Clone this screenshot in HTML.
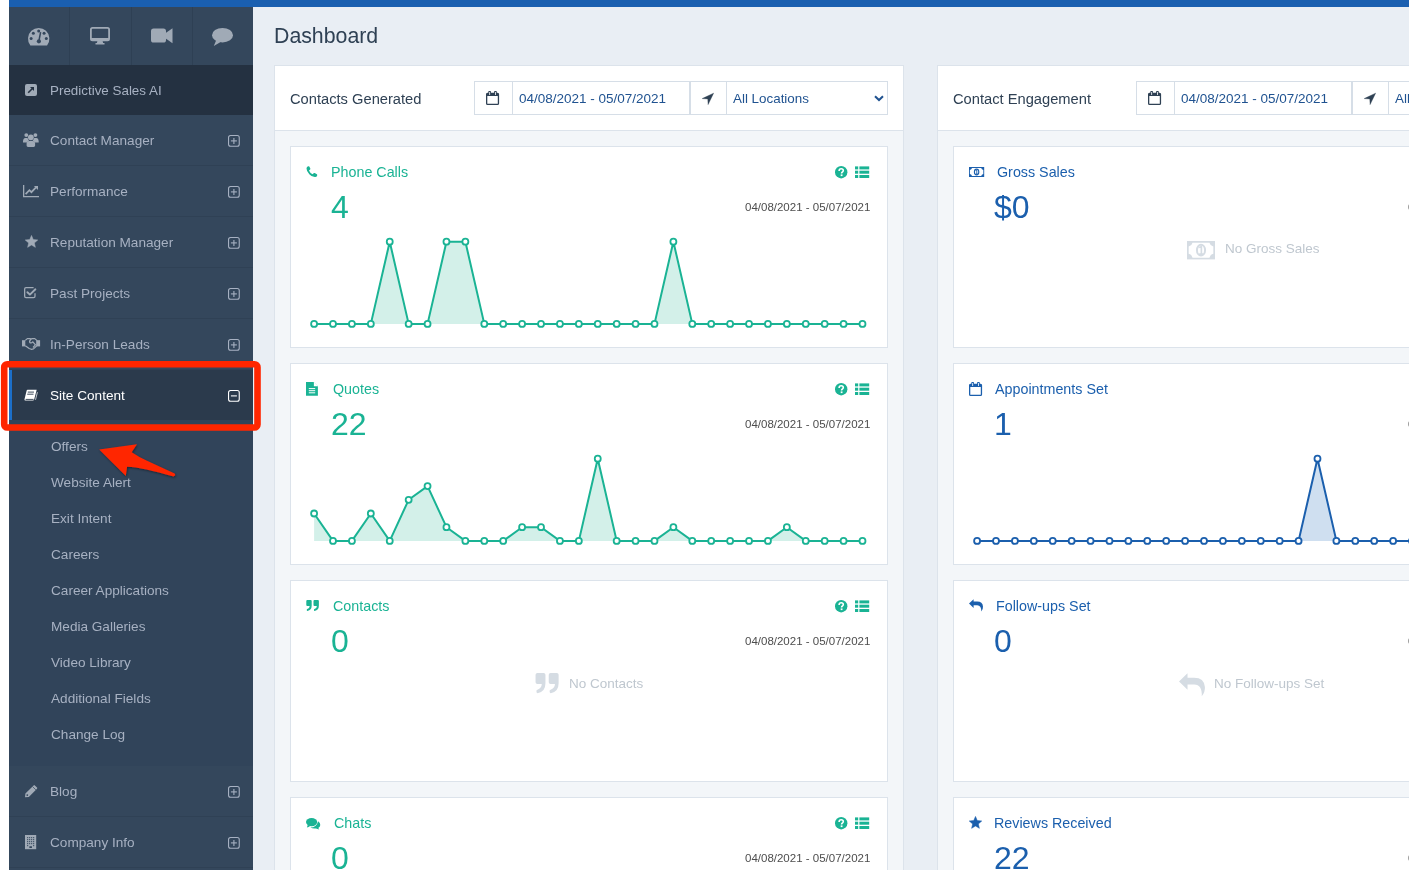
<!DOCTYPE html>
<html><head><meta charset="utf-8">
<style>
*{box-sizing:border-box;margin:0;padding:0}
html,body{width:1409px;height:870px;overflow:hidden;background:#fff;font-family:"Liberation Sans",sans-serif}
.abs{position:absolute}
.t{white-space:nowrap;will-change:transform}
svg{overflow:visible}
</style></head><body>

<div class="abs" style="left:9px;top:0;width:1400px;height:7px;background:#1a5fb0"></div>
<div class="abs" style="left:9px;top:7px;width:244px;height:863px;background:#34475c"></div>
<div class="abs" style="left:69px;top:7px;width:1px;height:58px;background:#2e4054"></div>
<div class="abs" style="left:131px;top:7px;width:1px;height:58px;background:#2e4054"></div>
<div class="abs" style="left:192px;top:7px;width:1px;height:58px;background:#2e4054"></div>
<svg class="abs" style="left:27.9px;top:27.6px" width="22" height="18" viewBox="0 0 22 18"><path d="M2.36 17.4 A10.7 10.7 0 1 1 19.04 17.4 Z" fill="#a0aab6"/><circle cx="10.70" cy="3.10" r="1.5" fill="#34475c"/><circle cx="5.33" cy="5.33" r="1.5" fill="#34475c"/><circle cx="16.07" cy="5.33" r="1.5" fill="#34475c"/><circle cx="3.10" cy="10.40" r="1.5" fill="#34475c"/><circle cx="18.30" cy="10.40" r="1.5" fill="#34475c"/><path d="M12.6 4.2 L11.1 12" stroke="#34475c" stroke-width="1.5"/><circle cx="10.9" cy="13.3" r="2.1" fill="#34475c"/></svg>
<svg class="abs" style="left:90px;top:27px" width="20" height="18" viewBox="0 0 20 18"><rect x="0.9" y="0.9" width="18.2" height="12.4" rx="1.6" fill="none" stroke="#a0aab6" stroke-width="1.8"/><rect x="1" y="11" width="18" height="2.5" fill="#a0aab6"/><path d="M7.5 13.5h5l.6 2.6h1.4v1.3H5.5v-1.3h1.4z" fill="#a0aab6"/></svg>
<svg class="abs" style="left:150.6px;top:28px" width="22" height="16" viewBox="0 0 22 16"><rect x="0" y="0.5" width="15" height="14" rx="2.6" fill="#a0aab6"/><path d="M14 5.5 L21.5 0.3 V15.2 L14 10z" fill="#a0aab6"/></svg>
<svg class="abs" style="left:212.3px;top:28px" width="21" height="18" viewBox="0 0 21 18"><ellipse cx="10.5" cy="7.2" rx="10.5" ry="7.2" fill="#a0aab6"/><path d="M4.5 11.5 L1.8 18 L9.5 13.5z" fill="#a0aab6"/></svg>
<div class="abs" style="left:9px;top:65px;width:244px;height:50px;background:#243141"></div>
<svg class="abs" style="left:25px;top:84px" width="12" height="12" viewBox="0 0 12 12"><rect x="0" y="0" width="12" height="12" rx="2" fill="#a0aab6"/><path d="M3.2 8.8 L8.2 3.8" stroke="#243141" stroke-width="1.6"/><path d="M5 3 H9 V7z" fill="#243141"/></svg>
<div class="abs t" style="left:50.4px;top:84px;font-size:13.4px;line-height:13.4px;color:#a7b1c2;">Predictive Sales AI</div>
<div class="abs" style="left:9px;top:165px;width:244px;height:1px;background:#2f4155"></div>
<svg class="abs" style="left:23px;top:133px" width="16" height="14" viewBox="0 0 16 14"><circle cx="3.3" cy="2.1" r="1.9" fill="#a0aab6"/><circle cx="12.4" cy="2.1" r="1.9" fill="#a0aab6"/><circle cx="7.85" cy="4.3" r="2.9" fill="#a0aab6"/><path d="M0 8.5c0-2 .9-3.6 2.3-3.6h1.8c.5 0 .8.4.9.9 .2.9.6 1.6 1.2 2.1-1 .3-1.8 .8-2.3 1.5H0z" fill="#a0aab6"/><path d="M15.7 8.5c0-2-.9-3.6-2.3-3.6h-1.8c-.5 0-.8.4-.9.9-.2.9-.6 1.6-1.2 2.1 1 .3 1.8.8 2.3 1.5h3.9z" fill="#a0aab6"/><path d="M3.6 12.6v-2c0-1.4 1-2.6 2.4-2.6h3.7c1.4 0 2.4 1.2 2.4 2.6v2c0 .8-.6 1.4-1.4 1.4H5c-.8 0-1.4-.6-1.4-1.4z" fill="#a0aab6"/></svg>
<div class="abs t" style="left:50.4px;top:134px;font-size:13.6px;line-height:13.6px;color:#a7b1c2;">Contact Manager</div>
<svg class="abs" style="left:227.5px;top:134.5px" width="12" height="12" viewBox="0 0 12 12"><rect x="0.55" y="0.55" width="10.7" height="10.7" rx="2" fill="none" stroke="#a7b1c2" stroke-width="1.1"/><path d="M2.9 5.9 H8.9" stroke="#a7b1c2" stroke-width="1.1"/><path d="M5.9 2.9 V8.9" stroke="#a7b1c2" stroke-width="1.1"/></svg>
<div class="abs" style="left:9px;top:216px;width:244px;height:1px;background:#2f4155"></div>
<svg class="abs" style="left:23px;top:184.8px" width="17" height="13" viewBox="0 0 17 13"><path d="M0.65 0 V11.6 H16" fill="none" stroke="#a0aab6" stroke-width="1.3"/><path d="M2.6 9.1 L6.4 5.2 L8.4 7.2 L13 2.4" fill="none" stroke="#a0aab6" stroke-width="1.7"/><path d="M10.9 1 H15 V5.1z" fill="#a0aab6"/></svg>
<div class="abs t" style="left:50.4px;top:185px;font-size:13.6px;line-height:13.6px;color:#a7b1c2;">Performance</div>
<svg class="abs" style="left:227.5px;top:185.5px" width="12" height="12" viewBox="0 0 12 12"><rect x="0.55" y="0.55" width="10.7" height="10.7" rx="2" fill="none" stroke="#a7b1c2" stroke-width="1.1"/><path d="M2.9 5.9 H8.9" stroke="#a7b1c2" stroke-width="1.1"/><path d="M5.9 2.9 V8.9" stroke="#a7b1c2" stroke-width="1.1"/></svg>
<div class="abs" style="left:9px;top:267px;width:244px;height:1px;background:#2f4155"></div>
<svg class="abs" style="left:24.5px;top:235px" width="13" height="13" viewBox="0 0 13 13"><polygon points="6.50,0.40 8.26,4.57 12.78,4.96 9.35,7.93 10.38,12.34 6.50,10.00 2.62,12.34 3.65,7.93 0.22,4.96 4.74,4.57" fill="#a0aab6" stroke="#a0aab6" stroke-width="0.5" stroke-linejoin="round"/></svg>
<div class="abs t" style="left:50.4px;top:236px;font-size:13.6px;line-height:13.6px;color:#a7b1c2;">Reputation Manager</div>
<svg class="abs" style="left:227.5px;top:236.5px" width="12" height="12" viewBox="0 0 12 12"><rect x="0.55" y="0.55" width="10.7" height="10.7" rx="2" fill="none" stroke="#a7b1c2" stroke-width="1.1"/><path d="M2.9 5.9 H8.9" stroke="#a7b1c2" stroke-width="1.1"/><path d="M5.9 2.9 V8.9" stroke="#a7b1c2" stroke-width="1.1"/></svg>
<div class="abs" style="left:9px;top:318px;width:244px;height:1px;background:#2f4155"></div>
<svg class="abs" style="left:24.2px;top:286.8px" width="13" height="12" viewBox="0 0 13 12"><path d="M11 6.2 V9.2 Q11 10.6 9.6 10.6 H2 Q0.65 10.6 0.65 9.2 V2.1 Q0.65 0.7 2 0.7 H9.6" fill="none" stroke="#a0aab6" stroke-width="1.3"/><path d="M3.4 5.2 L5.9 7.6 L11.4 2.3" fill="none" stroke="#a0aab6" stroke-width="1.9" stroke-linecap="round" stroke-linejoin="round"/></svg>
<div class="abs t" style="left:50.4px;top:287px;font-size:13.6px;line-height:13.6px;color:#a7b1c2;">Past Projects</div>
<svg class="abs" style="left:227.5px;top:287.5px" width="12" height="12" viewBox="0 0 12 12"><rect x="0.55" y="0.55" width="10.7" height="10.7" rx="2" fill="none" stroke="#a7b1c2" stroke-width="1.1"/><path d="M2.9 5.9 H8.9" stroke="#a7b1c2" stroke-width="1.1"/><path d="M5.9 2.9 V8.9" stroke="#a7b1c2" stroke-width="1.1"/></svg>
<div class="abs" style="left:9px;top:369px;width:244px;height:1px;background:#2f4155"></div>
<svg class="abs" style="left:22px;top:338.3px" width="18" height="12" viewBox="0 0 18 12"><rect x="0" y="2.2" width="3.3" height="6.2" fill="#a0aab6"/><rect x="14.8" y="2.2" width="3.3" height="6.2" fill="#a0aab6"/><path d="M3.3 2.4 L5.3 0.6 H8 L9 1.3 L10.1 0.6 H12.8 L14.8 2.4 V7.8 L11.5 10.9 L9.2 11.3 L7.2 10.5 L3.3 7.8" fill="none" stroke="#a0aab6" stroke-width="1.2" stroke-linejoin="round"/><path d="M9 1.3 Q6.8 3.2 8 4.8 Q9.4 5.4 10.8 3.8 L13.4 6.8 L11 9.5" fill="none" stroke="#a0aab6" stroke-width="1.2"/></svg>
<div class="abs t" style="left:50.4px;top:338px;font-size:13.6px;line-height:13.6px;color:#a7b1c2;">In-Person Leads</div>
<svg class="abs" style="left:227.5px;top:338.5px" width="12" height="12" viewBox="0 0 12 12"><rect x="0.55" y="0.55" width="10.7" height="10.7" rx="2" fill="none" stroke="#a7b1c2" stroke-width="1.1"/><path d="M2.9 5.9 H8.9" stroke="#a7b1c2" stroke-width="1.1"/><path d="M5.9 2.9 V8.9" stroke="#a7b1c2" stroke-width="1.1"/></svg>
<div class="abs" style="left:9px;top:370px;width:244px;height:50px;background:#2b3a4c"></div>
<div class="abs" style="left:9px;top:370px;width:3px;height:50px;background:#1c6fc9"></div>
<svg class="abs" style="left:24.4px;top:388.6px" width="14" height="13" viewBox="0 0 14 13"><path d="M3.6 0.8 H12.7 L10.2 10.2 Q10 11.5 8.8 11.5 H1.4 Q0.2 11.5 0.5 10.2 L2.6 1.8 Q2.8 0.8 3.6 0.8z" fill="#fff"/><path d="M1.6 10.4 H9.6" stroke="#2b3a4c" stroke-width="0.9"/><path d="M4.2 3.1 H9.6 M3.6 5.2 H9.1" stroke="#2b3a4c" stroke-width="0.9" stroke-linecap="round"/><path d="M13.4 3.2 L11.5 10.8" stroke="#fff" stroke-width="0.7"/></svg>
<div class="abs t" style="left:50.4px;top:389px;font-size:13.6px;line-height:13.6px;color:#fff;">Site Content</div>
<svg class="abs" style="left:227.5px;top:389.5px" width="12" height="12" viewBox="0 0 12 12"><rect x="0.55" y="0.55" width="10.7" height="10.7" rx="2" fill="none" stroke="#fff" stroke-width="1.1"/><path d="M2.9 5.9 H8.9" stroke="#fff" stroke-width="1.1"/></svg>
<div class="abs" style="left:9px;top:420px;width:244px;height:346px;background:#31445a"></div>
<div class="abs t" style="left:51px;top:440px;font-size:13.6px;line-height:13.6px;color:#a7b1c2;">Offers</div>
<div class="abs t" style="left:51px;top:476px;font-size:13.6px;line-height:13.6px;color:#a7b1c2;">Website Alert</div>
<div class="abs t" style="left:51px;top:512px;font-size:13.6px;line-height:13.6px;color:#a7b1c2;">Exit Intent</div>
<div class="abs t" style="left:51px;top:548px;font-size:13.6px;line-height:13.6px;color:#a7b1c2;">Careers</div>
<div class="abs t" style="left:51px;top:584px;font-size:13.6px;line-height:13.6px;color:#a7b1c2;">Career Applications</div>
<div class="abs t" style="left:51px;top:620px;font-size:13.6px;line-height:13.6px;color:#a7b1c2;">Media Galleries</div>
<div class="abs t" style="left:51px;top:656px;font-size:13.6px;line-height:13.6px;color:#a7b1c2;">Video Library</div>
<div class="abs t" style="left:51px;top:692px;font-size:13.6px;line-height:13.6px;color:#a7b1c2;">Additional Fields</div>
<div class="abs t" style="left:51px;top:728px;font-size:13.6px;line-height:13.6px;color:#a7b1c2;">Change Log</div>
<div class="abs" style="left:9px;top:816px;width:244px;height:1px;background:#2f4155"></div>
<svg class="abs" style="left:24.7px;top:784.9px" width="13" height="13" viewBox="0 0 13 13"><path d="M0 12.3 L0.4 8.6 L8.6 0.4 Q9.2 -0.2 9.8 0.4 L12 2.6 Q12.6 3.2 12 3.8 L3.8 12z" fill="#a0aab6"/><path d="M7.6 1.6 L10.9 4.9" stroke="#34475c" stroke-width="0.7"/><circle cx="2.3" cy="10.1" r="0.9" fill="#34475c"/></svg>
<div class="abs t" style="left:50.4px;top:785px;font-size:13.6px;line-height:13.6px;color:#a7b1c2;">Blog</div>
<svg class="abs" style="left:227.5px;top:785.5px" width="12" height="12" viewBox="0 0 12 12"><rect x="0.55" y="0.55" width="10.7" height="10.7" rx="2" fill="none" stroke="#a7b1c2" stroke-width="1.1"/><path d="M2.9 5.9 H8.9" stroke="#a7b1c2" stroke-width="1.1"/><path d="M5.9 2.9 V8.9" stroke="#a7b1c2" stroke-width="1.1"/></svg>
<div class="abs" style="left:9px;top:867px;width:244px;height:1px;background:#2f4155"></div>
<svg class="abs" style="left:24.9px;top:834.9px" width="12" height="15" viewBox="0 0 12 15"><rect x="0" y="0" width="11.2" height="14.2" fill="#a0aab6"/><rect x="2.1" y="2.1" width="1.1" height="1.1" fill="#34475c"/><rect x="4.1" y="2.1" width="1.1" height="1.1" fill="#34475c"/><rect x="6.1" y="2.1" width="1.1" height="1.1" fill="#34475c"/><rect x="8.1" y="2.1" width="1.1" height="1.1" fill="#34475c"/><rect x="2.1" y="4.1" width="1.1" height="1.1" fill="#34475c"/><rect x="4.1" y="4.1" width="1.1" height="1.1" fill="#34475c"/><rect x="6.1" y="4.1" width="1.1" height="1.1" fill="#34475c"/><rect x="8.1" y="4.1" width="1.1" height="1.1" fill="#34475c"/><rect x="2.1" y="6.1" width="1.1" height="1.1" fill="#34475c"/><rect x="4.1" y="6.1" width="1.1" height="1.1" fill="#34475c"/><rect x="6.1" y="6.1" width="1.1" height="1.1" fill="#34475c"/><rect x="8.1" y="6.1" width="1.1" height="1.1" fill="#34475c"/><rect x="2.1" y="8.1" width="1.1" height="1.1" fill="#34475c"/><rect x="4.1" y="8.1" width="1.1" height="1.1" fill="#34475c"/><rect x="6.1" y="8.1" width="1.1" height="1.1" fill="#34475c"/><rect x="8.1" y="8.1" width="1.1" height="1.1" fill="#34475c"/><rect x="2.1" y="10.1" width="1.1" height="1.1" fill="#34475c"/><rect x="8.1" y="10.1" width="1.1" height="1.1" fill="#34475c"/><rect x="4.3" y="11.3" width="2.7" height="1.6" rx="0.3" fill="#34475c"/></svg>
<div class="abs t" style="left:50.4px;top:836px;font-size:13.6px;line-height:13.6px;color:#a7b1c2;">Company Info</div>
<svg class="abs" style="left:227.5px;top:836.5px" width="12" height="12" viewBox="0 0 12 12"><rect x="0.55" y="0.55" width="10.7" height="10.7" rx="2" fill="none" stroke="#a7b1c2" stroke-width="1.1"/><path d="M2.9 5.9 H8.9" stroke="#a7b1c2" stroke-width="1.1"/><path d="M5.9 2.9 V8.9" stroke="#a7b1c2" stroke-width="1.1"/></svg>
<div class="abs" style="left:253px;top:7px;width:1156px;height:863px;background:#e9eef4"></div>
<div class="abs t" style="left:274px;top:26px;font-size:21.3px;line-height:21.3px;color:#2f4154;">Dashboard</div>
<div class="abs" style="left:274px;top:65px;width:630px;height:900px;background:#f3f6f9;border:1px solid #dce3eb"></div>
<div class="abs" style="left:275px;top:66px;width:628px;height:65px;background:#fff;border-bottom:1px solid #dce3eb"></div>
<div class="abs t" style="left:290px;top:92px;font-size:14.7px;line-height:14.7px;color:#2f4154;">Contacts Generated</div>
<div class="abs" style="left:474px;top:81px;width:414px;height:34px;background:#fff;border:1px solid #d6dee7"></div>
<div class="abs" style="left:512px;top:81px;width:1px;height:34px;background:#d6dee7"></div>
<div class="abs" style="left:689px;top:81px;width:1px;height:34px;background:#d6dee7"></div>
<div class="abs" style="left:690px;top:81px;width:1px;height:34px;background:#d6dee7"></div>
<div class="abs" style="left:726px;top:81px;width:1px;height:34px;background:#d6dee7"></div>
<svg class="abs" style="left:486px;top:90.5px" width="13" height="14" viewBox="0 0 13 14"><rect x="0.65" y="2.4" width="11.8" height="10.9" rx="0.9" fill="none" stroke="#2f4154" stroke-width="1.3"/><rect x="0.65" y="2.4" width="11.8" height="2.6" fill="#2f4154"/><rect x="2.3" y="0" width="2.7" height="4.5" rx="0.8" fill="#2f4154"/><rect x="8.1" y="0" width="2.7" height="4.5" rx="0.8" fill="#2f4154"/><rect x="3.3" y="1.0" width="0.8" height="3" fill="#fff"/><rect x="9.1" y="1.0" width="0.8" height="3" fill="#fff"/></svg>
<div class="abs t" style="left:518.5px;top:92px;font-size:13.5px;line-height:13.5px;color:#1f5290;">04/08/2021 - 05/07/2021</div>
<svg class="abs" style="left:702px;top:92.5px" width="12" height="12" viewBox="0 0 12 12"><path d="M11.6 0.2 L0.2 5.6 L5.8 5.9 L6.1 11.6z" fill="#2f4154" stroke="#2f4154" stroke-width="0.4" stroke-linejoin="round"/></svg>
<div class="abs t" style="left:732.5px;top:92px;font-size:13.4px;line-height:13.4px;color:#1f5290;">All Locations</div>
<svg class="abs" style="left:874px;top:95px" width="10" height="7" viewBox="0 0 10 7"><path d="M1 1.2 L5 5 L9 1.2" fill="none" stroke="#1f5290" stroke-width="2"/></svg>
<div class="abs" style="left:937px;top:65px;width:630px;height:900px;background:#f3f6f9;border:1px solid #dce3eb"></div>
<div class="abs" style="left:938px;top:66px;width:628px;height:65px;background:#fff;border-bottom:1px solid #dce3eb"></div>
<div class="abs t" style="left:953px;top:92px;font-size:14.7px;line-height:14.7px;color:#2f4154;">Contact Engagement</div>
<div class="abs" style="left:1136px;top:81px;width:414px;height:34px;background:#fff;border:1px solid #d6dee7"></div>
<div class="abs" style="left:1174px;top:81px;width:1px;height:34px;background:#d6dee7"></div>
<div class="abs" style="left:1351px;top:81px;width:1px;height:34px;background:#d6dee7"></div>
<div class="abs" style="left:1352px;top:81px;width:1px;height:34px;background:#d6dee7"></div>
<div class="abs" style="left:1388px;top:81px;width:1px;height:34px;background:#d6dee7"></div>
<svg class="abs" style="left:1148px;top:90.5px" width="13" height="14" viewBox="0 0 13 14"><rect x="0.65" y="2.4" width="11.8" height="10.9" rx="0.9" fill="none" stroke="#2f4154" stroke-width="1.3"/><rect x="0.65" y="2.4" width="11.8" height="2.6" fill="#2f4154"/><rect x="2.3" y="0" width="2.7" height="4.5" rx="0.8" fill="#2f4154"/><rect x="8.1" y="0" width="2.7" height="4.5" rx="0.8" fill="#2f4154"/><rect x="3.3" y="1.0" width="0.8" height="3" fill="#fff"/><rect x="9.1" y="1.0" width="0.8" height="3" fill="#fff"/></svg>
<div class="abs t" style="left:1180.5px;top:92px;font-size:13.5px;line-height:13.5px;color:#1f5290;">04/08/2021 - 05/07/2021</div>
<svg class="abs" style="left:1364px;top:92.5px" width="12" height="12" viewBox="0 0 12 12"><path d="M11.6 0.2 L0.2 5.6 L5.8 5.9 L6.1 11.6z" fill="#2f4154" stroke="#2f4154" stroke-width="0.4" stroke-linejoin="round"/></svg>
<div class="abs t" style="left:1394.5px;top:92px;font-size:13.4px;line-height:13.4px;color:#1f5290;">All Locations</div>
<svg class="abs" style="left:1536px;top:95px" width="10" height="7" viewBox="0 0 10 7"><path d="M1 1.2 L5 5 L9 1.2" fill="none" stroke="#1f5290" stroke-width="2"/></svg>
<div class="abs" style="left:290px;top:146px;width:598px;height:202px;background:#fff;border:1px solid #dce3eb;overflow:hidden">
<svg class="abs" style="left:-1px;top:-1px" width="598" height="202"><path d="M24.10,177.90 L24.10,177.90 L43.01,177.90 L61.92,177.90 L80.83,177.90 L99.74,95.70 L118.65,177.90 L137.56,177.90 L156.47,95.70 L175.38,95.70 L194.29,177.90 L213.20,177.90 L232.11,177.90 L251.02,177.90 L269.93,177.90 L288.84,177.90 L307.75,177.90 L326.66,177.90 L345.57,177.90 L364.48,177.90 L383.39,95.70 L402.30,177.90 L421.21,177.90 L440.12,177.90 L459.03,177.90 L477.94,177.90 L496.85,177.90 L515.76,177.90 L534.67,177.90 L553.58,177.90 L572.49,177.90 L572.49,177.90z" fill="#d3f0e9"/><polyline points="24.10,177.90 43.01,177.90 61.92,177.90 80.83,177.90 99.74,95.70 118.65,177.90 137.56,177.90 156.47,95.70 175.38,95.70 194.29,177.90 213.20,177.90 232.11,177.90 251.02,177.90 269.93,177.90 288.84,177.90 307.75,177.90 326.66,177.90 345.57,177.90 364.48,177.90 383.39,95.70 402.30,177.90 421.21,177.90 440.12,177.90 459.03,177.90 477.94,177.90 496.85,177.90 515.76,177.90 534.67,177.90 553.58,177.90 572.49,177.90" fill="none" stroke="#1ab394" stroke-width="2" stroke-linejoin="round"/><circle cx="24.10" cy="177.90" r="3" fill="#fff" stroke="#1ab394" stroke-width="1.8"/><circle cx="43.01" cy="177.90" r="3" fill="#fff" stroke="#1ab394" stroke-width="1.8"/><circle cx="61.92" cy="177.90" r="3" fill="#fff" stroke="#1ab394" stroke-width="1.8"/><circle cx="80.83" cy="177.90" r="3" fill="#fff" stroke="#1ab394" stroke-width="1.8"/><circle cx="99.74" cy="95.70" r="3" fill="#fff" stroke="#1ab394" stroke-width="1.8"/><circle cx="118.65" cy="177.90" r="3" fill="#fff" stroke="#1ab394" stroke-width="1.8"/><circle cx="137.56" cy="177.90" r="3" fill="#fff" stroke="#1ab394" stroke-width="1.8"/><circle cx="156.47" cy="95.70" r="3" fill="#fff" stroke="#1ab394" stroke-width="1.8"/><circle cx="175.38" cy="95.70" r="3" fill="#fff" stroke="#1ab394" stroke-width="1.8"/><circle cx="194.29" cy="177.90" r="3" fill="#fff" stroke="#1ab394" stroke-width="1.8"/><circle cx="213.20" cy="177.90" r="3" fill="#fff" stroke="#1ab394" stroke-width="1.8"/><circle cx="232.11" cy="177.90" r="3" fill="#fff" stroke="#1ab394" stroke-width="1.8"/><circle cx="251.02" cy="177.90" r="3" fill="#fff" stroke="#1ab394" stroke-width="1.8"/><circle cx="269.93" cy="177.90" r="3" fill="#fff" stroke="#1ab394" stroke-width="1.8"/><circle cx="288.84" cy="177.90" r="3" fill="#fff" stroke="#1ab394" stroke-width="1.8"/><circle cx="307.75" cy="177.90" r="3" fill="#fff" stroke="#1ab394" stroke-width="1.8"/><circle cx="326.66" cy="177.90" r="3" fill="#fff" stroke="#1ab394" stroke-width="1.8"/><circle cx="345.57" cy="177.90" r="3" fill="#fff" stroke="#1ab394" stroke-width="1.8"/><circle cx="364.48" cy="177.90" r="3" fill="#fff" stroke="#1ab394" stroke-width="1.8"/><circle cx="383.39" cy="95.70" r="3" fill="#fff" stroke="#1ab394" stroke-width="1.8"/><circle cx="402.30" cy="177.90" r="3" fill="#fff" stroke="#1ab394" stroke-width="1.8"/><circle cx="421.21" cy="177.90" r="3" fill="#fff" stroke="#1ab394" stroke-width="1.8"/><circle cx="440.12" cy="177.90" r="3" fill="#fff" stroke="#1ab394" stroke-width="1.8"/><circle cx="459.03" cy="177.90" r="3" fill="#fff" stroke="#1ab394" stroke-width="1.8"/><circle cx="477.94" cy="177.90" r="3" fill="#fff" stroke="#1ab394" stroke-width="1.8"/><circle cx="496.85" cy="177.90" r="3" fill="#fff" stroke="#1ab394" stroke-width="1.8"/><circle cx="515.76" cy="177.90" r="3" fill="#fff" stroke="#1ab394" stroke-width="1.8"/><circle cx="534.67" cy="177.90" r="3" fill="#fff" stroke="#1ab394" stroke-width="1.8"/><circle cx="553.58" cy="177.90" r="3" fill="#fff" stroke="#1ab394" stroke-width="1.8"/><circle cx="572.49" cy="177.90" r="3" fill="#fff" stroke="#1ab394" stroke-width="1.8"/></svg>
</div>
<svg class="abs" style="left:306px;top:165.9px" width="12" height="12" viewBox="0 0 12 12"><path d="M2.2 0.2 Q2.9 0 3.3 0.6 L4.3 2.5 Q4.6 3.1 4.1 3.6 L3.0 4.5 Q3.9 6.9 6.6 8.3 L7.6 7.3 Q8.1 6.8 8.7 7.1 L10.9 8.3 Q11.4 8.7 11.2 9.4 Q10.7 11 9.2 11.1 Q6 11.3 3.3 8.2 Q0.6 5.4 0.5 2.4 Q0.6 0.8 2.2 0.2z" fill="#1ab394"/></svg>
<div class="abs t" style="left:331px;top:165px;font-size:14.3px;line-height:14.3px;color:#1ab394;">Phone Calls</div>
<div class="abs t" style="left:331px;top:191px;font-size:32px;line-height:32px;color:#1ab394;">4</div>
<div class="abs t" style="right:539px;top:202px;font-size:11.5px;line-height:11.5px;color:#4d4d4d;text-align:right;">04/08/2021 - 05/07/2021</div>
<svg class="abs" style="left:834.8px;top:165.8px" width="13" height="13" viewBox="0 0 13 13"><circle cx="6.2" cy="6.2" r="6.2" fill="#1ab394"/><path d="M4.1 4.9 Q4.1 2.8 6.2 2.8 Q8.3 2.8 8.3 4.6 Q8.3 5.6 7.2 6.2 Q6.6 6.6 6.6 7.4" fill="none" stroke="#fff" stroke-width="1.6"/><rect x="5.7" y="8.4" width="1.8" height="1.7" fill="#fff"/></svg>
<svg class="abs" style="left:855.4px;top:165.8px" width="15" height="13" viewBox="0 0 15 13"><rect x="0" y="0.4" width="3.2" height="3" fill="#1ab394"/><rect x="4.4" y="0.4" width="9.8" height="3" fill="#1ab394"/><rect x="0" y="4.7" width="3.2" height="3" fill="#1ab394"/><rect x="4.4" y="4.7" width="9.8" height="3" fill="#1ab394"/><rect x="0" y="9.0" width="3.2" height="3" fill="#1ab394"/><rect x="4.4" y="9.0" width="9.8" height="3" fill="#1ab394"/></svg>
<div class="abs" style="left:290px;top:363px;width:598px;height:202px;background:#fff;border:1px solid #dce3eb;overflow:hidden">
<svg class="abs" style="left:-1px;top:-1px" width="598" height="202"><path d="M24.10,177.90 L24.10,150.50 L43.01,177.90 L61.92,177.90 L80.83,150.50 L99.74,177.90 L118.65,136.80 L137.56,123.10 L156.47,164.20 L175.38,177.90 L194.29,177.90 L213.20,177.90 L232.11,164.20 L251.02,164.20 L269.93,177.90 L288.84,177.90 L307.75,95.70 L326.66,177.90 L345.57,177.90 L364.48,177.90 L383.39,164.20 L402.30,177.90 L421.21,177.90 L440.12,177.90 L459.03,177.90 L477.94,177.90 L496.85,164.20 L515.76,177.90 L534.67,177.90 L553.58,177.90 L572.49,177.90 L572.49,177.90z" fill="#d3f0e9"/><polyline points="24.10,150.50 43.01,177.90 61.92,177.90 80.83,150.50 99.74,177.90 118.65,136.80 137.56,123.10 156.47,164.20 175.38,177.90 194.29,177.90 213.20,177.90 232.11,164.20 251.02,164.20 269.93,177.90 288.84,177.90 307.75,95.70 326.66,177.90 345.57,177.90 364.48,177.90 383.39,164.20 402.30,177.90 421.21,177.90 440.12,177.90 459.03,177.90 477.94,177.90 496.85,164.20 515.76,177.90 534.67,177.90 553.58,177.90 572.49,177.90" fill="none" stroke="#1ab394" stroke-width="2" stroke-linejoin="round"/><circle cx="24.10" cy="150.50" r="3" fill="#fff" stroke="#1ab394" stroke-width="1.8"/><circle cx="43.01" cy="177.90" r="3" fill="#fff" stroke="#1ab394" stroke-width="1.8"/><circle cx="61.92" cy="177.90" r="3" fill="#fff" stroke="#1ab394" stroke-width="1.8"/><circle cx="80.83" cy="150.50" r="3" fill="#fff" stroke="#1ab394" stroke-width="1.8"/><circle cx="99.74" cy="177.90" r="3" fill="#fff" stroke="#1ab394" stroke-width="1.8"/><circle cx="118.65" cy="136.80" r="3" fill="#fff" stroke="#1ab394" stroke-width="1.8"/><circle cx="137.56" cy="123.10" r="3" fill="#fff" stroke="#1ab394" stroke-width="1.8"/><circle cx="156.47" cy="164.20" r="3" fill="#fff" stroke="#1ab394" stroke-width="1.8"/><circle cx="175.38" cy="177.90" r="3" fill="#fff" stroke="#1ab394" stroke-width="1.8"/><circle cx="194.29" cy="177.90" r="3" fill="#fff" stroke="#1ab394" stroke-width="1.8"/><circle cx="213.20" cy="177.90" r="3" fill="#fff" stroke="#1ab394" stroke-width="1.8"/><circle cx="232.11" cy="164.20" r="3" fill="#fff" stroke="#1ab394" stroke-width="1.8"/><circle cx="251.02" cy="164.20" r="3" fill="#fff" stroke="#1ab394" stroke-width="1.8"/><circle cx="269.93" cy="177.90" r="3" fill="#fff" stroke="#1ab394" stroke-width="1.8"/><circle cx="288.84" cy="177.90" r="3" fill="#fff" stroke="#1ab394" stroke-width="1.8"/><circle cx="307.75" cy="95.70" r="3" fill="#fff" stroke="#1ab394" stroke-width="1.8"/><circle cx="326.66" cy="177.90" r="3" fill="#fff" stroke="#1ab394" stroke-width="1.8"/><circle cx="345.57" cy="177.90" r="3" fill="#fff" stroke="#1ab394" stroke-width="1.8"/><circle cx="364.48" cy="177.90" r="3" fill="#fff" stroke="#1ab394" stroke-width="1.8"/><circle cx="383.39" cy="164.20" r="3" fill="#fff" stroke="#1ab394" stroke-width="1.8"/><circle cx="402.30" cy="177.90" r="3" fill="#fff" stroke="#1ab394" stroke-width="1.8"/><circle cx="421.21" cy="177.90" r="3" fill="#fff" stroke="#1ab394" stroke-width="1.8"/><circle cx="440.12" cy="177.90" r="3" fill="#fff" stroke="#1ab394" stroke-width="1.8"/><circle cx="459.03" cy="177.90" r="3" fill="#fff" stroke="#1ab394" stroke-width="1.8"/><circle cx="477.94" cy="177.90" r="3" fill="#fff" stroke="#1ab394" stroke-width="1.8"/><circle cx="496.85" cy="164.20" r="3" fill="#fff" stroke="#1ab394" stroke-width="1.8"/><circle cx="515.76" cy="177.90" r="3" fill="#fff" stroke="#1ab394" stroke-width="1.8"/><circle cx="534.67" cy="177.90" r="3" fill="#fff" stroke="#1ab394" stroke-width="1.8"/><circle cx="553.58" cy="177.90" r="3" fill="#fff" stroke="#1ab394" stroke-width="1.8"/><circle cx="572.49" cy="177.90" r="3" fill="#fff" stroke="#1ab394" stroke-width="1.8"/></svg>
</div>
<svg class="abs" style="left:306px;top:382px" width="12" height="14" viewBox="0 0 12 14"><path d="M0 0 H7.6 L11.9 4.3 V13.8 H0z" fill="#1ab394"/><path d="M7.9 -0.2 V4.2 H12.1" fill="#fff"/><path d="M7.9 0 L12 4.1" stroke="#1ab394" stroke-width="0"/><path d="M2.8 6.6 H9.2 M2.8 8.7 H9.2 M2.8 10.8 H9.2" stroke="#fff" stroke-width="1"/></svg>
<div class="abs t" style="left:332.5px;top:382px;font-size:14.3px;line-height:14.3px;color:#1ab394;">Quotes</div>
<div class="abs t" style="left:331px;top:408px;font-size:32px;line-height:32px;color:#1ab394;">22</div>
<div class="abs t" style="right:539px;top:419px;font-size:11.5px;line-height:11.5px;color:#4d4d4d;text-align:right;">04/08/2021 - 05/07/2021</div>
<svg class="abs" style="left:834.8px;top:382.8px" width="13" height="13" viewBox="0 0 13 13"><circle cx="6.2" cy="6.2" r="6.2" fill="#1ab394"/><path d="M4.1 4.9 Q4.1 2.8 6.2 2.8 Q8.3 2.8 8.3 4.6 Q8.3 5.6 7.2 6.2 Q6.6 6.6 6.6 7.4" fill="none" stroke="#fff" stroke-width="1.6"/><rect x="5.7" y="8.4" width="1.8" height="1.7" fill="#fff"/></svg>
<svg class="abs" style="left:855.4px;top:382.8px" width="15" height="13" viewBox="0 0 15 13"><rect x="0" y="0.4" width="3.2" height="3" fill="#1ab394"/><rect x="4.4" y="0.4" width="9.8" height="3" fill="#1ab394"/><rect x="0" y="4.7" width="3.2" height="3" fill="#1ab394"/><rect x="4.4" y="4.7" width="9.8" height="3" fill="#1ab394"/><rect x="0" y="9.0" width="3.2" height="3" fill="#1ab394"/><rect x="4.4" y="9.0" width="9.8" height="3" fill="#1ab394"/></svg>
<div class="abs" style="left:290px;top:580px;width:598px;height:202px;background:#fff;border:1px solid #dce3eb;overflow:hidden">
</div>
<svg class="abs" style="left:306px;top:599.9px" width="13.2" height="11.2" viewBox="0 0 13.2 11.2"><path d="M0.3 1 Q0.3 0 1.3 0 H4.7 Q5.7 0 5.7 1 V5.6 Q5.7 10.3 1.4 11 Q0.8 11 0.8 10.3 V9.6 Q0.8 9.3 1.3 9.1 Q3.6 8.4 3.7 6 H1.3 Q0.3 6 0.3 5zM7.5 1 Q7.5 0 8.5 0 H11.9 Q12.9 0 12.9 1 V5.6 Q12.9 10.3 8.6 11 Q8.0 11 8.0 10.3 V9.6 Q8.0 9.3 8.5 9.1 Q10.8 8.4 10.9 6 H8.5 Q7.5 6 7.5 5z" fill="#1ab394"/></svg>
<div class="abs t" style="left:333px;top:599px;font-size:14.3px;line-height:14.3px;color:#1ab394;">Contacts</div>
<div class="abs t" style="left:331px;top:625px;font-size:32px;line-height:32px;color:#1ab394;">0</div>
<div class="abs t" style="right:539px;top:636px;font-size:11.5px;line-height:11.5px;color:#4d4d4d;text-align:right;">04/08/2021 - 05/07/2021</div>
<svg class="abs" style="left:834.8px;top:599.8px" width="13" height="13" viewBox="0 0 13 13"><circle cx="6.2" cy="6.2" r="6.2" fill="#1ab394"/><path d="M4.1 4.9 Q4.1 2.8 6.2 2.8 Q8.3 2.8 8.3 4.6 Q8.3 5.6 7.2 6.2 Q6.6 6.6 6.6 7.4" fill="none" stroke="#fff" stroke-width="1.6"/><rect x="5.7" y="8.4" width="1.8" height="1.7" fill="#fff"/></svg>
<svg class="abs" style="left:855.4px;top:599.8px" width="15" height="13" viewBox="0 0 15 13"><rect x="0" y="0.4" width="3.2" height="3" fill="#1ab394"/><rect x="4.4" y="0.4" width="9.8" height="3" fill="#1ab394"/><rect x="0" y="4.7" width="3.2" height="3" fill="#1ab394"/><rect x="4.4" y="4.7" width="9.8" height="3" fill="#1ab394"/><rect x="0" y="9.0" width="3.2" height="3" fill="#1ab394"/><rect x="4.4" y="9.0" width="9.8" height="3" fill="#1ab394"/></svg>
<svg class="abs" style="left:535px;top:673.3px" width="24.2" height="20.5" viewBox="0 0 13.2 11.2"><path d="M0.3 1 Q0.3 0 1.3 0 H4.7 Q5.7 0 5.7 1 V5.6 Q5.7 10.3 1.4 11 Q0.8 11 0.8 10.3 V9.6 Q0.8 9.3 1.3 9.1 Q3.6 8.4 3.7 6 H1.3 Q0.3 6 0.3 5zM7.5 1 Q7.5 0 8.5 0 H11.9 Q12.9 0 12.9 1 V5.6 Q12.9 10.3 8.6 11 Q8.0 11 8.0 10.3 V9.6 Q8.0 9.3 8.5 9.1 Q10.8 8.4 10.9 6 H8.5 Q7.5 6 7.5 5z" fill="#d5dce3"/></svg>
<div class="abs t" style="left:568.7px;top:677px;font-size:13.5px;line-height:13.5px;color:#bfc7cf;">No Contacts</div>
<div class="abs" style="left:290px;top:797px;width:598px;height:202px;background:#fff;border:1px solid #dce3eb;overflow:hidden">
</div>
<svg class="abs" style="left:306px;top:817.8px" width="15" height="12" viewBox="0 0 15 12"><path d="M12.1 3.2 Q14.4 4.6 14.3 7 Q14.2 8.8 12.3 10.1 L13.3 11.4 Q11.2 11.2 10 10.5 Q7 10.9 4.2 9.5 Q10.6 9.5 12.1 3.2z" fill="#1ab394"/><ellipse cx="5.6" cy="4.1" rx="5.6" ry="4.1" fill="#1ab394"/><path d="M1.8 6.8 L0.9 9.4 Q2.6 9.3 4.4 7.8z" fill="#1ab394"/></svg>
<div class="abs t" style="left:334px;top:816px;font-size:14.3px;line-height:14.3px;color:#1ab394;">Chats</div>
<div class="abs t" style="left:331px;top:842px;font-size:32px;line-height:32px;color:#1ab394;">0</div>
<div class="abs t" style="right:539px;top:853px;font-size:11.5px;line-height:11.5px;color:#4d4d4d;text-align:right;">04/08/2021 - 05/07/2021</div>
<svg class="abs" style="left:834.8px;top:816.8px" width="13" height="13" viewBox="0 0 13 13"><circle cx="6.2" cy="6.2" r="6.2" fill="#1ab394"/><path d="M4.1 4.9 Q4.1 2.8 6.2 2.8 Q8.3 2.8 8.3 4.6 Q8.3 5.6 7.2 6.2 Q6.6 6.6 6.6 7.4" fill="none" stroke="#fff" stroke-width="1.6"/><rect x="5.7" y="8.4" width="1.8" height="1.7" fill="#fff"/></svg>
<svg class="abs" style="left:855.4px;top:816.8px" width="15" height="13" viewBox="0 0 15 13"><rect x="0" y="0.4" width="3.2" height="3" fill="#1ab394"/><rect x="4.4" y="0.4" width="9.8" height="3" fill="#1ab394"/><rect x="0" y="4.7" width="3.2" height="3" fill="#1ab394"/><rect x="4.4" y="4.7" width="9.8" height="3" fill="#1ab394"/><rect x="0" y="9.0" width="3.2" height="3" fill="#1ab394"/><rect x="4.4" y="9.0" width="9.8" height="3" fill="#1ab394"/></svg>
<div class="abs" style="left:953px;top:146px;width:598px;height:202px;background:#fff;border:1px solid #dce3eb;overflow:hidden">
</div>
<svg class="abs" style="left:969px;top:167px" width="15.2" height="10.0" viewBox="0 0 15.2 10"><rect x="0" y="0" width="15.2" height="10" fill="#1b5fad"/><path d="M3 0.9 H12.2 Q12.6 2.6 14.3 3 V7 Q12.6 7.4 12.2 9.1 H3 Q2.6 7.4 0.9 7 V3 Q2.6 2.6 3 0.9z" fill="#fff"/><ellipse cx="7.6" cy="5" rx="2.2" ry="2.9" fill="none" stroke="#1b5fad" stroke-width="1.1"/><path d="M6.6 3.6 L7.8 3 V7 M6.6 7.1 H9" stroke="#1b5fad" stroke-width="0.9" fill="none"/></svg>
<div class="abs t" style="left:997px;top:165px;font-size:14.3px;line-height:14.3px;color:#1b5fad;">Gross Sales</div>
<div class="abs t" style="left:994px;top:191px;font-size:32px;line-height:32px;color:#1b5fad;">$0</div>
<div class="abs t" style="right:-124px;top:202px;font-size:11.5px;line-height:11.5px;color:#4d4d4d;text-align:right;">04/08/2021 - 05/07/2021</div>
<svg class="abs" style="left:1497.8px;top:165.8px" width="13" height="13" viewBox="0 0 13 13"><circle cx="6.2" cy="6.2" r="6.2" fill="#1b5fad"/><path d="M4.1 4.9 Q4.1 2.8 6.2 2.8 Q8.3 2.8 8.3 4.6 Q8.3 5.6 7.2 6.2 Q6.6 6.6 6.6 7.4" fill="none" stroke="#fff" stroke-width="1.6"/><rect x="5.7" y="8.4" width="1.8" height="1.7" fill="#fff"/></svg>
<svg class="abs" style="left:1518.4px;top:165.8px" width="15" height="13" viewBox="0 0 15 13"><rect x="0" y="0.4" width="3.2" height="3" fill="#1b5fad"/><rect x="4.4" y="0.4" width="9.8" height="3" fill="#1b5fad"/><rect x="0" y="4.7" width="3.2" height="3" fill="#1b5fad"/><rect x="4.4" y="4.7" width="9.8" height="3" fill="#1b5fad"/><rect x="0" y="9.0" width="3.2" height="3" fill="#1b5fad"/><rect x="4.4" y="9.0" width="9.8" height="3" fill="#1b5fad"/></svg>
<svg class="abs" style="left:1187px;top:241.4px" width="28.0" height="18.4" viewBox="0 0 15.2 10"><rect x="0" y="0" width="15.2" height="10" fill="#d5dce3"/><path d="M3 0.9 H12.2 Q12.6 2.6 14.3 3 V7 Q12.6 7.4 12.2 9.1 H3 Q2.6 7.4 0.9 7 V3 Q2.6 2.6 3 0.9z" fill="#fff"/><ellipse cx="7.6" cy="5" rx="2.2" ry="2.9" fill="none" stroke="#d5dce3" stroke-width="1.1"/><path d="M6.6 3.6 L7.8 3 V7 M6.6 7.1 H9" stroke="#d5dce3" stroke-width="0.9" fill="none"/></svg>
<div class="abs t" style="left:1224.6px;top:242px;font-size:13.5px;line-height:13.5px;color:#bfc7cf;">No Gross Sales</div>
<div class="abs" style="left:953px;top:363px;width:598px;height:202px;background:#fff;border:1px solid #dce3eb;overflow:hidden">
<svg class="abs" style="left:-1px;top:-1px" width="598" height="202"><path d="M24.10,177.90 L24.10,177.90 L43.01,177.90 L61.92,177.90 L80.83,177.90 L99.74,177.90 L118.65,177.90 L137.56,177.90 L156.47,177.90 L175.38,177.90 L194.29,177.90 L213.20,177.90 L232.11,177.90 L251.02,177.90 L269.93,177.90 L288.84,177.90 L307.75,177.90 L326.66,177.90 L345.57,177.90 L364.48,95.70 L383.39,177.90 L402.30,177.90 L421.21,177.90 L440.12,177.90 L459.03,177.90 L477.94,177.90 L496.85,177.90 L515.76,177.90 L534.67,177.90 L553.58,177.90 L572.49,177.90 L572.49,177.90z" fill="#cfdff0"/><polyline points="24.10,177.90 43.01,177.90 61.92,177.90 80.83,177.90 99.74,177.90 118.65,177.90 137.56,177.90 156.47,177.90 175.38,177.90 194.29,177.90 213.20,177.90 232.11,177.90 251.02,177.90 269.93,177.90 288.84,177.90 307.75,177.90 326.66,177.90 345.57,177.90 364.48,95.70 383.39,177.90 402.30,177.90 421.21,177.90 440.12,177.90 459.03,177.90 477.94,177.90 496.85,177.90 515.76,177.90 534.67,177.90 553.58,177.90 572.49,177.90" fill="none" stroke="#1b5fad" stroke-width="2" stroke-linejoin="round"/><circle cx="24.10" cy="177.90" r="3" fill="#fff" stroke="#1b5fad" stroke-width="1.8"/><circle cx="43.01" cy="177.90" r="3" fill="#fff" stroke="#1b5fad" stroke-width="1.8"/><circle cx="61.92" cy="177.90" r="3" fill="#fff" stroke="#1b5fad" stroke-width="1.8"/><circle cx="80.83" cy="177.90" r="3" fill="#fff" stroke="#1b5fad" stroke-width="1.8"/><circle cx="99.74" cy="177.90" r="3" fill="#fff" stroke="#1b5fad" stroke-width="1.8"/><circle cx="118.65" cy="177.90" r="3" fill="#fff" stroke="#1b5fad" stroke-width="1.8"/><circle cx="137.56" cy="177.90" r="3" fill="#fff" stroke="#1b5fad" stroke-width="1.8"/><circle cx="156.47" cy="177.90" r="3" fill="#fff" stroke="#1b5fad" stroke-width="1.8"/><circle cx="175.38" cy="177.90" r="3" fill="#fff" stroke="#1b5fad" stroke-width="1.8"/><circle cx="194.29" cy="177.90" r="3" fill="#fff" stroke="#1b5fad" stroke-width="1.8"/><circle cx="213.20" cy="177.90" r="3" fill="#fff" stroke="#1b5fad" stroke-width="1.8"/><circle cx="232.11" cy="177.90" r="3" fill="#fff" stroke="#1b5fad" stroke-width="1.8"/><circle cx="251.02" cy="177.90" r="3" fill="#fff" stroke="#1b5fad" stroke-width="1.8"/><circle cx="269.93" cy="177.90" r="3" fill="#fff" stroke="#1b5fad" stroke-width="1.8"/><circle cx="288.84" cy="177.90" r="3" fill="#fff" stroke="#1b5fad" stroke-width="1.8"/><circle cx="307.75" cy="177.90" r="3" fill="#fff" stroke="#1b5fad" stroke-width="1.8"/><circle cx="326.66" cy="177.90" r="3" fill="#fff" stroke="#1b5fad" stroke-width="1.8"/><circle cx="345.57" cy="177.90" r="3" fill="#fff" stroke="#1b5fad" stroke-width="1.8"/><circle cx="364.48" cy="95.70" r="3" fill="#fff" stroke="#1b5fad" stroke-width="1.8"/><circle cx="383.39" cy="177.90" r="3" fill="#fff" stroke="#1b5fad" stroke-width="1.8"/><circle cx="402.30" cy="177.90" r="3" fill="#fff" stroke="#1b5fad" stroke-width="1.8"/><circle cx="421.21" cy="177.90" r="3" fill="#fff" stroke="#1b5fad" stroke-width="1.8"/><circle cx="440.12" cy="177.90" r="3" fill="#fff" stroke="#1b5fad" stroke-width="1.8"/><circle cx="459.03" cy="177.90" r="3" fill="#fff" stroke="#1b5fad" stroke-width="1.8"/><circle cx="477.94" cy="177.90" r="3" fill="#fff" stroke="#1b5fad" stroke-width="1.8"/><circle cx="496.85" cy="177.90" r="3" fill="#fff" stroke="#1b5fad" stroke-width="1.8"/><circle cx="515.76" cy="177.90" r="3" fill="#fff" stroke="#1b5fad" stroke-width="1.8"/><circle cx="534.67" cy="177.90" r="3" fill="#fff" stroke="#1b5fad" stroke-width="1.8"/><circle cx="553.58" cy="177.90" r="3" fill="#fff" stroke="#1b5fad" stroke-width="1.8"/><circle cx="572.49" cy="177.90" r="3" fill="#fff" stroke="#1b5fad" stroke-width="1.8"/></svg>
</div>
<svg class="abs" style="left:969px;top:382px" width="13" height="14" viewBox="0 0 13 14"><rect x="0.65" y="2.4" width="11.8" height="10.9" rx="0.9" fill="none" stroke="#1b5fad" stroke-width="1.3"/><rect x="0.65" y="2.4" width="11.8" height="2.6" fill="#1b5fad"/><rect x="2.3" y="0" width="2.7" height="4.5" rx="0.8" fill="#1b5fad"/><rect x="8.1" y="0" width="2.7" height="4.5" rx="0.8" fill="#1b5fad"/><rect x="3.3" y="1.0" width="0.8" height="3" fill="#fff"/><rect x="9.1" y="1.0" width="0.8" height="3" fill="#fff"/></svg>
<div class="abs t" style="left:995px;top:382px;font-size:14.3px;line-height:14.3px;color:#1b5fad;">Appointments Set</div>
<div class="abs t" style="left:994px;top:408px;font-size:32px;line-height:32px;color:#1b5fad;">1</div>
<div class="abs t" style="right:-124px;top:419px;font-size:11.5px;line-height:11.5px;color:#4d4d4d;text-align:right;">04/08/2021 - 05/07/2021</div>
<svg class="abs" style="left:1497.8px;top:382.8px" width="13" height="13" viewBox="0 0 13 13"><circle cx="6.2" cy="6.2" r="6.2" fill="#1b5fad"/><path d="M4.1 4.9 Q4.1 2.8 6.2 2.8 Q8.3 2.8 8.3 4.6 Q8.3 5.6 7.2 6.2 Q6.6 6.6 6.6 7.4" fill="none" stroke="#fff" stroke-width="1.6"/><rect x="5.7" y="8.4" width="1.8" height="1.7" fill="#fff"/></svg>
<svg class="abs" style="left:1518.4px;top:382.8px" width="15" height="13" viewBox="0 0 15 13"><rect x="0" y="0.4" width="3.2" height="3" fill="#1b5fad"/><rect x="4.4" y="0.4" width="9.8" height="3" fill="#1b5fad"/><rect x="0" y="4.7" width="3.2" height="3" fill="#1b5fad"/><rect x="4.4" y="4.7" width="9.8" height="3" fill="#1b5fad"/><rect x="0" y="9.0" width="3.2" height="3" fill="#1b5fad"/><rect x="4.4" y="9.0" width="9.8" height="3" fill="#1b5fad"/></svg>
<div class="abs" style="left:953px;top:580px;width:598px;height:202px;background:#fff;border:1px solid #dce3eb;overflow:hidden">
</div>
<svg class="abs" style="left:969px;top:599.3px" width="14.2" height="12.6" viewBox="0 0 14.2 12.6"><path d="M0 4.6 L4.6 0.2 V2.6 H8.2 Q13.6 2.6 14 7.6 Q14.2 10.3 12.3 12.6 Q12.6 6.3 8.2 6.2 H4.6 V9z" fill="#1b5fad"/></svg>
<div class="abs t" style="left:995.5px;top:599px;font-size:14.3px;line-height:14.3px;color:#1b5fad;">Follow-ups Set</div>
<div class="abs t" style="left:994px;top:625px;font-size:32px;line-height:32px;color:#1b5fad;">0</div>
<div class="abs t" style="right:-124px;top:636px;font-size:11.5px;line-height:11.5px;color:#4d4d4d;text-align:right;">04/08/2021 - 05/07/2021</div>
<svg class="abs" style="left:1497.8px;top:599.8px" width="13" height="13" viewBox="0 0 13 13"><circle cx="6.2" cy="6.2" r="6.2" fill="#1b5fad"/><path d="M4.1 4.9 Q4.1 2.8 6.2 2.8 Q8.3 2.8 8.3 4.6 Q8.3 5.6 7.2 6.2 Q6.6 6.6 6.6 7.4" fill="none" stroke="#fff" stroke-width="1.6"/><rect x="5.7" y="8.4" width="1.8" height="1.7" fill="#fff"/></svg>
<svg class="abs" style="left:1518.4px;top:599.8px" width="15" height="13" viewBox="0 0 15 13"><rect x="0" y="0.4" width="3.2" height="3" fill="#1b5fad"/><rect x="4.4" y="0.4" width="9.8" height="3" fill="#1b5fad"/><rect x="0" y="4.7" width="3.2" height="3" fill="#1b5fad"/><rect x="4.4" y="4.7" width="9.8" height="3" fill="#1b5fad"/><rect x="0" y="9.0" width="3.2" height="3" fill="#1b5fad"/><rect x="4.4" y="9.0" width="9.8" height="3" fill="#1b5fad"/></svg>
<svg class="abs" style="left:1178.8px;top:672.6px" width="26.3" height="23.3" viewBox="0 0 14.2 12.6"><path d="M0 4.6 L4.6 0.2 V2.6 H8.2 Q13.6 2.6 14 7.6 Q14.2 10.3 12.3 12.6 Q12.6 6.3 8.2 6.2 H4.6 V9z" fill="#d5dce3"/></svg>
<div class="abs t" style="left:1214.4px;top:677px;font-size:13.5px;line-height:13.5px;color:#bfc7cf;">No Follow-ups Set</div>
<div class="abs" style="left:953px;top:797px;width:598px;height:202px;background:#fff;border:1px solid #dce3eb;overflow:hidden">
</div>
<svg class="abs" style="left:969px;top:816px" width="13" height="13" viewBox="0 0 13 13"><polygon points="6.50,0.40 8.26,4.57 12.78,4.96 9.35,7.93 10.38,12.34 6.50,10.00 2.62,12.34 3.65,7.93 0.22,4.96 4.74,4.57" fill="#1b5fad" stroke="#1b5fad" stroke-width="0.5" stroke-linejoin="round"/></svg>
<div class="abs t" style="left:994px;top:816px;font-size:14.3px;line-height:14.3px;color:#1b5fad;">Reviews Received</div>
<div class="abs t" style="left:994px;top:842px;font-size:32px;line-height:32px;color:#1b5fad;">22</div>
<div class="abs t" style="right:-124px;top:853px;font-size:11.5px;line-height:11.5px;color:#4d4d4d;text-align:right;">04/08/2021 - 05/07/2021</div>
<svg class="abs" style="left:1497.8px;top:816.8px" width="13" height="13" viewBox="0 0 13 13"><circle cx="6.2" cy="6.2" r="6.2" fill="#1b5fad"/><path d="M4.1 4.9 Q4.1 2.8 6.2 2.8 Q8.3 2.8 8.3 4.6 Q8.3 5.6 7.2 6.2 Q6.6 6.6 6.6 7.4" fill="none" stroke="#fff" stroke-width="1.6"/><rect x="5.7" y="8.4" width="1.8" height="1.7" fill="#fff"/></svg>
<svg class="abs" style="left:1518.4px;top:816.8px" width="15" height="13" viewBox="0 0 15 13"><rect x="0" y="0.4" width="3.2" height="3" fill="#1b5fad"/><rect x="4.4" y="0.4" width="9.8" height="3" fill="#1b5fad"/><rect x="0" y="4.7" width="3.2" height="3" fill="#1b5fad"/><rect x="4.4" y="4.7" width="9.8" height="3" fill="#1b5fad"/><rect x="0" y="9.0" width="3.2" height="3" fill="#1b5fad"/><rect x="4.4" y="9.0" width="9.8" height="3" fill="#1b5fad"/></svg>
<svg class="abs" style="left:0;top:0" width="1409" height="870"><defs><filter id="sh" x="-20%" y="-20%" width="140%" height="140%"><feDropShadow dx="0.6" dy="1" stdDeviation="0.9" flood-color="#000" flood-opacity="0.45"/></filter></defs><rect x="4.2" y="364.3" width="253.3" height="63.2" rx="3" fill="none" stroke="#ff2600" stroke-width="6.6"/><path filter="url(#sh)" d="M99.2 449.4 L137 444.2 L131.7 452.2 Q138 456.5 147 460.8 L174.6 473.6 Q176.2 475.6 173.6 476.4 Q158 472.4 146.5 469.6 Q135 466.8 127.1 466.7 L125.8 476 Z" fill="#ff2600"/></svg>
</body></html>
